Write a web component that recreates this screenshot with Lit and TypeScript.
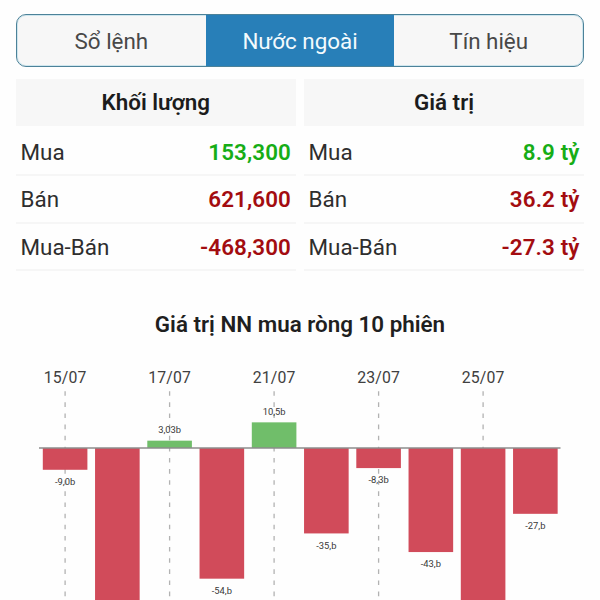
import { LitElement, html, svg, css } from "lit";
import { customElement, property } from "lit/decorators.js";
import { classMap } from "lit/directives/class-map.js";

interface Row {
  label: string;
  value: string;
  up?: boolean;
}

interface Session {
  value: number;
  label?: string;
  date?: string;
}

const VOLUME: Row[] = [
  { label: "Mua", value: "153,300", up: true },
  { label: "Bán", value: "621,600" },
  { label: "Mua-Bán", value: "-468,300" },
];

const VALUE: Row[] = [
  { label: "Mua", value: "8.9 tỷ", up: true },
  { label: "Bán", value: "36.2 tỷ" },
  { label: "Mua-Bán", value: "-27.3 tỷ" },
];

const SESSIONS: Session[] = [
  { value: -9, label: "-9,0b", date: "15/07" },
  { value: -90 },
  { value: 3.03, label: "3,03b", date: "17/07" },
  { value: -54, label: "-54,b" },
  { value: 10.6, label: "10,5b", date: "21/07" },
  { value: -35.3, label: "-35,b" },
  { value: -8.3, label: "-8,3b", date: "23/07" },
  { value: -43, label: "-43,b" },
  { value: -90, date: "25/07" },
  { value: -27.2, label: "-27,b" },
];

@customElement("flow-table")
export class FlowTable extends LitElement {
  static styles = css`
    :host {
      display: block;
    }

    .title {
      height: 47px;
      line-height: 47px;
      margin-bottom: 3px;
      background: #f7f7f7;
      text-align: center;
      font-weight: 600;
      color: #1c1c1c;
    }

    .row {
      display: flex;
      justify-content: space-between;
      height: 47.3px;
      line-height: 47px;
      padding: 0 4.5px;
      box-sizing: border-box;
      border-bottom: 2px solid #f6f6f6;
    }

    .row__label {
      color: #2e2e2e;
    }

    .row__value {
      font-weight: 600;
      letter-spacing: 0.1px;
      color: #a30c10;
    }

    .row__value--up {
      color: #16ad16;
    }
  `;

  @property()
  heading = "";

  @property({ attribute: false })
  rows: Row[] = [];

  render() {
    return html`
      <div class="title">${this.heading}</div>
      ${this.rows.map(
        (row) => html`<div class="row">
          <span class="row__label">${row.label}</span>
          <span
            class=${classMap({ row__value: true, "row__value--up": !!row.up })}
            >${row.value}</span
          >
        </div>`
      )}
    `;
  }
}

@customElement("net-chart")
export class NetChart extends LitElement {
  static styles = css`
    :host {
      display: block;
    }

    svg {
      display: block;
    }

    .guide {
      stroke: #b2b2b2;
      stroke-width: 1.3;
      stroke-dasharray: 4.6 6.53;
    }

    .axis {
      stroke: #8c8c8c;
      stroke-width: 1.6;
    }

    .bar {
      fill: #d14b5a;
    }
    .bar--up {
      fill: #70be6a;
    }

    text {
      text-anchor: middle;
    }
    .date {
      font-size: 15.8px;
      letter-spacing: 0.1px;
      fill: #404040;
    }
    .amount {
      font-size: 9.4px;
      fill: #383838;
    }
  `;

  @property({ attribute: false })
  sessions: Session[] = [];

  zero = 88;
  unit = 2.42;
  step = 52.25;
  barWidth = 44.6;

  center(index: number) {
    return 65.1 + index * this.step;
  }

  renderBar(session: Session, index: number) {
    const size = Math.abs(session.value) * this.unit;
    const up = session.value > 0;
    const x = this.center(index);
    return svg`
      <rect
        class=${up ? "bar bar--up" : "bar"}
        x=${x - this.barWidth / 2}
        y=${up ? this.zero - size : this.zero}
        width=${this.barWidth}
        height=${size}
      />
      ${
        session.label
          ? svg`<text
              class="amount"
              x=${x}
              y=${up ? this.zero - size - 7.2 : this.zero + size + 15.4}
            >${session.label}</text>`
          : null
      }
    `;
  }

  render() {
    return html`<svg width="600" height="240" viewBox="0 0 600 240">
      ${this.sessions.map((session, i) =>
        session.date
          ? svg`
            <text class="date" x=${this.center(i)} y="22.5">${session.date}</text>
            <line class="guide" x1=${this.center(i)} x2=${this.center(i)} y1="31.2" y2="240" />
          `
          : null
      )}
      ${this.sessions.map((session, i) => this.renderBar(session, i))}
      <line class="axis" x1="39" x2="560.5" y1="88" y2="88" />
    </svg>`;
  }
}

@customElement("app-root")
export class AppRoot extends LitElement {
  static styles = css`
    :host {
      display: flex;
      flex-direction: column;
      width: 600px;
      height: 600px;
      padding-top: 14px;
      box-sizing: border-box;
      overflow: hidden;
      background: #fefefe;
      font-family: Roboto, "Liberation Sans", sans-serif;
      font-size: 22.4px;
    }

    .tabs {
      display: flex;
      flex: none;
      height: 53px;
      margin: 0 16px 12px;
      box-sizing: border-box;
      border: 1px solid #4c8299;
      border-radius: 10px;
      overflow: hidden;
      background: #f7f7f7;
      box-shadow: inset 0 0 0 1px #cfe6ee;
    }

    .tab {
      flex: 1;
      padding: 2px 0 0;
      border: 0;
      background: none;
      font: inherit;
      line-height: 49px;
      color: #484848;
    }

    .tab--active {
      background: #287fb8;
      color: #f3fafd;
    }

    .tables {
      display: grid;
      grid-template-columns: 279.5px 280px;
      gap: 8.5px;
      flex: none;
      height: 192px;
      margin: 0 16px 38px;
    }

    .heading {
      flex: none;
      margin: 0 0 21px;
      height: 30px;
      line-height: 31px;
      text-align: center;
      font-size: 22.4px;
      font-weight: 600;
      color: #1f1f1f;
    }

    net-chart {
      flex: none;
    }
  `;

  tabs = ["Sổ lệnh", "Nước ngoài", "Tín hiệu"];

  @property()
  active = "Nước ngoài";

  render() {
    return html`
      <nav class="tabs">
        ${this.tabs.map(
          (tab) => html`<button
            class=${classMap({ tab: true, "tab--active": tab === this.active })}
            @click=${() => (this.active = tab)}
          >
            ${tab}
          </button>`
        )}
      </nav>
      <section class="tables">
        <flow-table heading="Khối lượng" .rows=${VOLUME}></flow-table>
        <flow-table heading="Giá trị" .rows=${VALUE}></flow-table>
      </section>
      <h2 class="heading">Giá trị NN mua ròng 10 phiên</h2>
      <net-chart .sessions=${SESSIONS}></net-chart>
    `;
  }
}
